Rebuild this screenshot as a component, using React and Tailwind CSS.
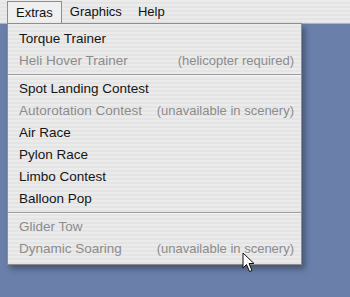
import React from 'react';

const stripes =
  'bg-[repeating-linear-gradient(180deg,#ebebeb_0px,#ebebeb_2px,#e4e4e4_2px,#e4e4e4_4px)]';

const items = [
  { label: 'Torque Trainer' },
  { label: 'Heli Hover Trainer', note: '(helicopter required)', disabled: true },
  { sep: true },
  { label: 'Spot Landing Contest' },
  { label: 'Autorotation Contest', note: '(unavailable in scenery)', disabled: true },
  { label: 'Air Race' },
  { label: 'Pylon Race' },
  { label: 'Limbo Contest' },
  { label: 'Balloon Pop' },
  { sep: true },
  { label: 'Glider Tow', disabled: true },
  { label: 'Dynamic Soaring', note: '(unavailable in scenery)', disabled: true },
];

const Cursor = () => (
  <svg width="14" height="22" viewBox="0 0 14 22" className="absolute left-[242px] top-[252px]">
    <path
      d="M1 1 L1 16 L4.5 12.5 L7.5 19.5 L10 18.5 L7 11.5 L12 11.5 Z"
      fill="#ffffff"
      stroke="#111111"
      strokeWidth="1"
      strokeLinejoin="round"
    />
  </svg>
);

const App = () => {
  return (
    <div
      className="relative w-[350px] h-[297px] overflow-hidden bg-[#6a80aa] text-[13px]"
      style={{ fontFamily: '"Liberation Sans", Arial, sans-serif' }}
    >
      {/* menu bar */}
      <div className={`flex h-[24px] pl-[7px] border-b border-[#b4b4b4] ${stripes}`}>
        <div className="flex items-center px-2 mt-px border border-b-0 border-[#8e8e8e] bg-[#f0f0f0] text-[#111]">
          Extras
        </div>
        <div className="flex items-center px-2 text-[#111]">Graphics</div>
        <div className="flex items-center px-2 text-[#111]">Help</div>
      </div>

      {/* dropdown */}
      <div
        className={`absolute left-[7px] top-[23px] w-[295px] py-[4px] border border-[#8e8e8e] shadow-[3px_4px_6px_rgba(0,0,0,0.35)] ${stripes}`}
      >
        {items.map((it, i) =>
          it.sep ? (
            <div key={i} className="h-[6px] flex flex-col justify-center">
              <div className="h-px bg-[#9c9c9c]" />
              <div className="h-px bg-[#f6f6f6]" />
            </div>
          ) : (
            <div
              key={i}
              className={`flex items-center justify-between h-[22px] pl-[11px] pr-[7px] ${
                it.disabled ? 'text-[#8c8c8c]' : 'text-[#151515]'
              }`}
            >
              <span className="text-[13.5px]">{it.label}</span>
              {it.note && <span>{it.note}</span>}
            </div>
          )
        )}
      </div>

      <Cursor />
    </div>
  );
};

export default App;
